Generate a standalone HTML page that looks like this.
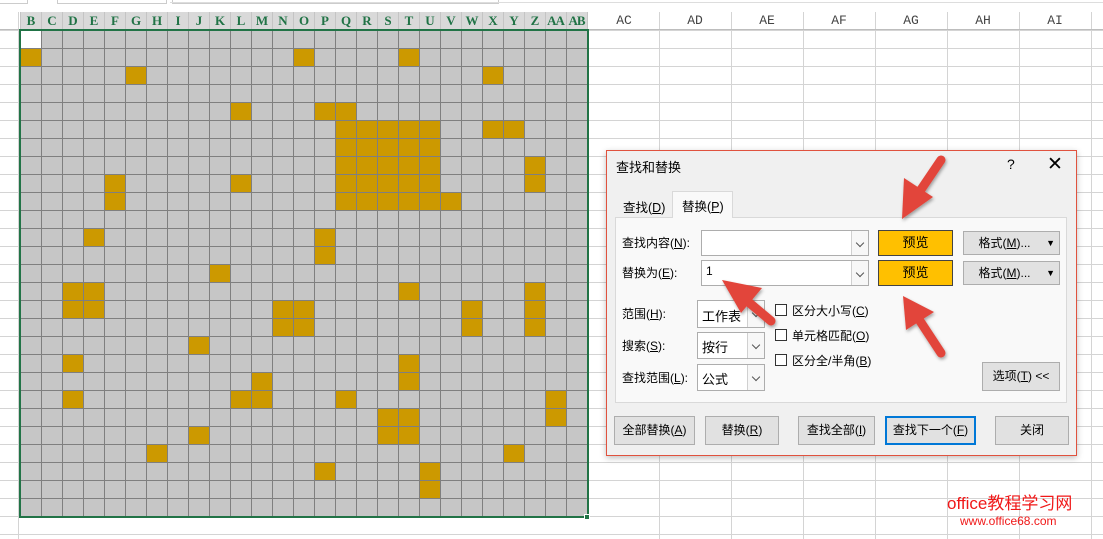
<!DOCTYPE html>
<html><head><meta charset="utf-8"><style>
*{margin:0;padding:0;box-sizing:border-box}
body{width:1103px;height:539px;overflow:hidden;background:#fff;position:relative;font-family:"Liberation Sans","Noto Sans CJK SC",sans-serif;}
.abs{position:absolute}
#rightgrid{left:0;top:30px;width:1103px;height:509px;background-image:linear-gradient(#d4d4d4 1px,transparent 1px);background-size:100% 18px}
.vl{position:absolute;top:12px;width:1px;height:527px;background:#d4d4d4}
#grid{left:20px;top:30px;width:568px;height:487px;background-color:#c6c6c6;background-image:linear-gradient(90deg,#7f7f7f 1px,transparent 1px),linear-gradient(#7f7f7f 1px,transparent 1px);background-size:21px 18px,21px 18px;}
#grid i{position:absolute;width:20px;height:17px;background:#cc9900}
#gborder{left:19px;top:29px;width:570px;height:489px;border:2px solid #217346}
.hd{position:absolute;top:13px;height:17px;font:bold 13px "Liberation Serif","Noto Serif CJK SC",serif;color:#217346;text-align:center;width:21px;letter-spacing:-1px}
.hr{position:absolute;top:13px;height:17px;font:13px "Liberation Mono",monospace;color:#444;text-align:center;width:72px}
#dlg{left:606px;top:150px;width:471px;height:306px;background:#f0f0f0;border:1px solid #e0523e;box-shadow:0 2px 6px rgba(0,0,0,.25);font-size:12px;color:#000}
#dlg .t{position:absolute;white-space:nowrap;font-family:"Liberation Sans","Noto Sans CJK SC",sans-serif}
.box{position:absolute;background:#fff;border:1px solid #adadad}
.dd{position:absolute;right:0;top:0;bottom:0;width:17px;border-left:1px solid #d0d0d0;background:#f7f7f7}
.dd:after{content:"";position:absolute;left:5px;top:9px;width:5px;height:5px;border-right:1px solid #555;border-bottom:1px solid #555;transform:rotate(45deg)}
.btn{position:absolute;background:#e1e1e1;border:1px solid #adadad;text-align:center;font-size:12px}
.yb{position:absolute;background:#ffc000;border:1px solid #444;text-align:center;font-size:13px}
.cb{position:absolute;width:12px;height:12px;border:1px solid #333;background:#fff}
</style></head><body>
<div class="abs" style="left:0;top:0;width:28px;height:4px;border-right:1px solid #ccc;border-bottom:1px solid #ccc"></div>
<div class="abs" style="left:57px;top:0;width:110px;height:4px;border:1px solid #ccc;border-top:none"></div>
<div class="abs" style="left:172px;top:0;width:327px;height:4px;border:1px solid #ccc;border-top:none"></div>
<div class="abs" style="left:170px;top:2px;width:933px;height:1px;background:#ddd"></div>
<div id="rightgrid" class="abs"></div>
<div class="vl" style="left:18px"></div>
<div class="vl" style="left:659px"></div><div class="vl" style="left:731px"></div><div class="vl" style="left:803px"></div><div class="vl" style="left:875px"></div><div class="vl" style="left:947px"></div><div class="vl" style="left:1019px"></div><div class="vl" style="left:1091px"></div>
<div class="abs" style="left:20px;top:12px;width:568px;height:18px;background:#d9d9d9;background-image:linear-gradient(90deg,#c4c4c4 1px,transparent 1px);background-size:21px 18px"></div>
<div class="abs" style="left:0;top:29px;width:1103px;height:1px;background:#bdbdbd"></div>
<div class="hd" style="left:20px">B</div><div class="hd" style="left:41px">C</div><div class="hd" style="left:62px">D</div><div class="hd" style="left:83px">E</div><div class="hd" style="left:104px">F</div><div class="hd" style="left:125px">G</div><div class="hd" style="left:146px">H</div><div class="hd" style="left:167px">I</div><div class="hd" style="left:188px">J</div><div class="hd" style="left:209px">K</div><div class="hd" style="left:230px">L</div><div class="hd" style="left:251px">M</div><div class="hd" style="left:272px">N</div><div class="hd" style="left:293px">O</div><div class="hd" style="left:314px">P</div><div class="hd" style="left:335px">Q</div><div class="hd" style="left:356px">R</div><div class="hd" style="left:377px">S</div><div class="hd" style="left:398px">T</div><div class="hd" style="left:419px">U</div><div class="hd" style="left:440px">V</div><div class="hd" style="left:461px">W</div><div class="hd" style="left:482px">X</div><div class="hd" style="left:503px">Y</div><div class="hd" style="left:524px">Z</div><div class="hd" style="left:545px">AA</div><div class="hd" style="left:566px">AB</div>
<div class="hr" style="left:588px">AC</div><div class="hr" style="left:659px">AD</div><div class="hr" style="left:731px">AE</div><div class="hr" style="left:803px">AF</div><div class="hr" style="left:875px">AG</div><div class="hr" style="left:947px">AH</div><div class="hr" style="left:1019px">AI</div>

<div id="grid" class="abs">
<i style="left:1px;top:1px;background:#fff"></i>
<i style="left:1px;top:19px"></i><i style="left:274px;top:19px"></i><i style="left:379px;top:19px"></i>
<i style="left:106px;top:37px"></i><i style="left:463px;top:37px"></i>
<i style="left:211px;top:73px"></i><i style="left:295px;top:73px"></i><i style="left:316px;top:73px"></i>
<i style="left:316px;top:91px"></i><i style="left:337px;top:91px"></i><i style="left:358px;top:91px"></i><i style="left:379px;top:91px"></i><i style="left:400px;top:91px"></i><i style="left:463px;top:91px"></i><i style="left:484px;top:91px"></i>
<i style="left:316px;top:109px"></i><i style="left:337px;top:109px"></i><i style="left:358px;top:109px"></i><i style="left:379px;top:109px"></i><i style="left:400px;top:109px"></i>
<i style="left:316px;top:127px"></i><i style="left:337px;top:127px"></i><i style="left:358px;top:127px"></i><i style="left:379px;top:127px"></i><i style="left:400px;top:127px"></i><i style="left:505px;top:127px"></i>
<i style="left:85px;top:145px"></i><i style="left:211px;top:145px"></i><i style="left:316px;top:145px"></i><i style="left:337px;top:145px"></i><i style="left:358px;top:145px"></i><i style="left:379px;top:145px"></i><i style="left:400px;top:145px"></i><i style="left:505px;top:145px"></i>
<i style="left:85px;top:163px"></i><i style="left:316px;top:163px"></i><i style="left:337px;top:163px"></i><i style="left:358px;top:163px"></i><i style="left:379px;top:163px"></i><i style="left:400px;top:163px"></i><i style="left:421px;top:163px"></i>
<i style="left:64px;top:199px"></i><i style="left:295px;top:199px"></i>
<i style="left:295px;top:217px"></i>
<i style="left:190px;top:235px"></i>
<i style="left:43px;top:253px"></i><i style="left:64px;top:253px"></i><i style="left:379px;top:253px"></i><i style="left:505px;top:253px"></i>
<i style="left:43px;top:271px"></i><i style="left:64px;top:271px"></i><i style="left:253px;top:271px"></i><i style="left:274px;top:271px"></i><i style="left:442px;top:271px"></i><i style="left:505px;top:271px"></i>
<i style="left:253px;top:289px"></i><i style="left:274px;top:289px"></i><i style="left:442px;top:289px"></i><i style="left:505px;top:289px"></i>
<i style="left:169px;top:307px"></i>
<i style="left:43px;top:325px"></i><i style="left:379px;top:325px"></i>
<i style="left:232px;top:343px"></i><i style="left:379px;top:343px"></i>
<i style="left:43px;top:361px"></i><i style="left:211px;top:361px"></i><i style="left:232px;top:361px"></i><i style="left:316px;top:361px"></i><i style="left:526px;top:361px"></i>
<i style="left:358px;top:379px"></i><i style="left:379px;top:379px"></i><i style="left:526px;top:379px"></i>
<i style="left:169px;top:397px"></i><i style="left:358px;top:397px"></i><i style="left:379px;top:397px"></i>
<i style="left:127px;top:415px"></i><i style="left:484px;top:415px"></i>
<i style="left:295px;top:433px"></i><i style="left:400px;top:433px"></i>
<i style="left:400px;top:451px"></i>
</div>
<div id="gborder" class="abs"></div>
<div class="abs" style="left:584px;top:514px;width:6px;height:6px;background:#217346;border:1px solid #fff"></div>

<div id="dlg" class="abs">
<div class="t" style="left:9px;top:6px;font-size:13px">查找和替换</div>
<div class="t" style="left:400px;top:5px;font-size:14px">?</div>
<div class="t" style="left:440px;top:2px;font-size:19px;font-family:'DejaVu Sans',sans-serif;font-weight:200">✕</div>
<div class="abs" style="left:8px;top:66px;width:452px;height:186px;background:#f9f9f9;border:1px solid #d9d9d9"></div>
<div class="t" style="left:16px;top:46px;font-size:12.5px">查找(<u>D</u>)</div>
<div class="abs" style="left:65px;top:40px;width:61px;height:27px;background:#f9f9f9;border:1px solid #d9d9d9;border-bottom:none"></div>
<div class="t" style="left:75px;top:45px;font-size:12.5px">替换(<u>P</u>)</div>
<div class="t" style="left:15px;top:83px">查找内容(<u>N</u>):</div>
<div class="t" style="left:15px;top:113px">替换为(<u>E</u>):</div>
<div class="box" style="left:94px;top:79px;width:168px;height:26px"><div class="dd"></div></div>
<div class="box" style="left:94px;top:109px;width:168px;height:26px"><span class="t" style="left:4px;top:3px">1</span><div class="dd"></div></div>
<div class="yb" style="left:271px;top:79px;width:75px;height:26px;line-height:24px">预览</div>
<div class="yb" style="left:271px;top:109px;width:75px;height:26px;line-height:24px">预览</div>
<div class="btn" style="left:356px;top:80px;width:97px;height:24px;line-height:22px;padding-right:14px">格式(<u>M</u>)...<span style="position:absolute;right:4px;top:0;font-size:9px">▼</span></div>
<div class="btn" style="left:356px;top:110px;width:97px;height:24px;line-height:22px;padding-right:14px">格式(<u>M</u>)...<span style="position:absolute;right:4px;top:0;font-size:9px">▼</span></div>
<div class="t" style="left:15px;top:154px">范围(<u>H</u>):</div>
<div class="t" style="left:15px;top:186px">搜索(<u>S</u>):</div>
<div class="t" style="left:15px;top:218px">查找范围(<u>L</u>):</div>
<div class="box" style="left:90px;top:149px;width:68px;height:28px"><span class="t" style="left:4px;top:5px;font-size:13px">工作表</span><div class="dd"></div></div>
<div class="box" style="left:90px;top:181px;width:68px;height:27px"><span class="t" style="left:4px;top:4px;font-size:13px">按行</span><div class="dd"></div></div>
<div class="box" style="left:90px;top:213px;width:68px;height:27px"><span class="t" style="left:4px;top:4px;font-size:13px">公式</span><div class="dd"></div></div>
<div class="cb" style="left:168px;top:153px"></div><div class="t" style="left:185px;top:151px">区分大小写(<u>C</u>)</div>
<div class="cb" style="left:168px;top:178px"></div><div class="t" style="left:185px;top:176px">单元格匹配(<u>O</u>)</div>
<div class="cb" style="left:168px;top:203px"></div><div class="t" style="left:185px;top:201px">区分全/半角(<u>B</u>)</div>
<div class="btn" style="left:375px;top:211px;width:78px;height:29px;line-height:27px">选项(<u>T</u>) &lt;&lt;</div>
<div class="btn" style="left:7px;top:265px;width:81px;height:29px;line-height:27px">全部替换(<u>A</u>)</div>
<div class="btn" style="left:98px;top:265px;width:74px;height:29px;line-height:27px">替换(<u>R</u>)</div>
<div class="btn" style="left:191px;top:265px;width:77px;height:29px;line-height:27px">查找全部(<u>I</u>)</div>
<div class="btn" style="left:278px;top:265px;width:91px;height:29px;line-height:25px;border:2px solid #0078d7">查找下一个(<u>F</u>)</div>
<div class="btn" style="left:388px;top:265px;width:74px;height:29px;line-height:27px">关闭</div>
</div>

<svg class="abs" style="left:0;top:0" width="1103" height="539">
<defs><filter id="sh"><feDropShadow dx="1" dy="2" stdDeviation="1.5" flood-opacity="0.35"/></filter></defs>
<g fill="#e2453a" filter="url(#sh)">
<line x1="941" y1="160" x2="918" y2="194" stroke="#e2453a" stroke-width="9" stroke-linecap="round"/>
<polygon points="902,219 904,178 933,197"/>
<line x1="771" y1="321" x2="746" y2="300" stroke="#e2453a" stroke-width="9" stroke-linecap="round"/>
<polygon points="722,280 762,288 741,313"/>
<line x1="941" y1="353" x2="920" y2="321" stroke="#e2453a" stroke-width="9" stroke-linecap="round"/>
<polygon points="903,296 934,312 906,330"/>
</g>
</svg>
<div class="abs" style="left:947px;top:489px;font-size:17px;color:#f01818;font-family:'Liberation Sans','Noto Sans CJK SC',sans-serif;white-space:nowrap">office教程学习网</div>
<div class="abs" style="left:960px;top:514px;font-size:12px;color:#f01818;white-space:nowrap">www.office68.com</div>
</body></html>
